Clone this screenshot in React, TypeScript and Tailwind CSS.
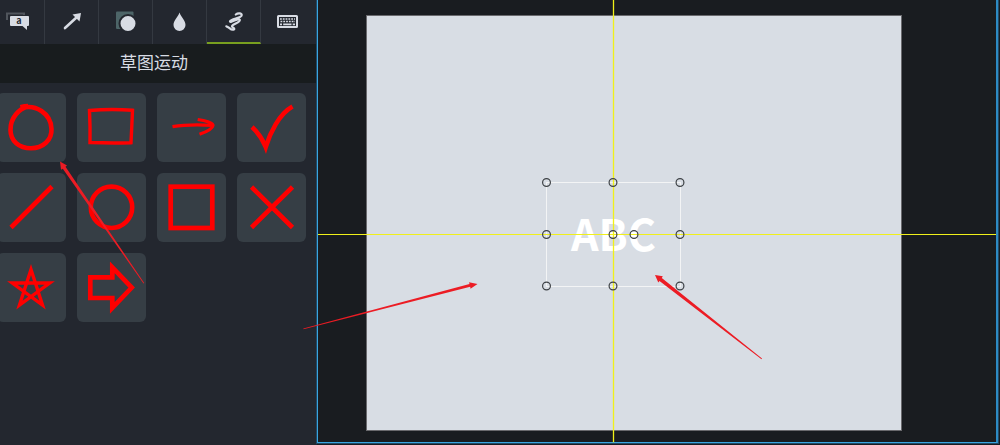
import type { ReactNode } from "react";

const TABS: { name: string; icon: ReactNode }[] = [
  {
    name: "标注",
    icon: (
      <>
        <path d="M17 20V13.5H34V15" fill="none" stroke="#50555c" strokeWidth="2" />
        <path d="M21 16H38.200Q39 16 39 17V25Q39 26 38 26H37V30L32.500 26H21Q20 26 20 25V17Q20 16 21 16Z" fill="#d8dce4" />
        <text x="29" y="24" textAnchor="middle" fontSize="9" fontWeight="700" fill="#23272f">
          a
        </text>
      </>
    ),
  },
  {
    name: "箭头",
    icon: (
      <>
        <path d="M21 28L33 17" stroke="#d8dce4" strokeWidth="2.600" strokeLinecap="round" />
        <path d="M37 13L28.500 14.500L35.500 21.500Z" fill="#d8dce4" />
      </>
    ),
  },
  {
    name: "形状",
    icon: (
      <>
        <rect x="18" y="11.500" width="17.500" height="17.500" rx="1" fill="#4d6568" />
        <circle cx="30" cy="23.500" r="8.500" fill="#d8dce4" stroke="#23272f" strokeWidth="2" />
      </>
    ),
  },
  {
    name: "模糊",
    icon: <path d="M27.500 12.500C29 17 33.500 20.500 33.500 25A6 6 0 0 1 21.500 25C21.500 20.500 26 17 27.500 12.500Z" fill="#d8dce4" />,
  },
  {
    name: "草图运动",
    icon: (
      <path
        d="M29.800 14.500C32 12.600 36.800 13 35.500 15.800C34 18.500 25 18.500 24 21.300C23.500 23.800 32.500 17.300 33.800 19.800C34.500 22.800 25.800 24 26 26.500C26.500 28 29.500 28.300 27.800 29.500C24.800 31 23.300 26.800 20.300 26.300"
        fill="none"
        stroke="#d8dce4"
        strokeWidth="2.200"
        strokeLinecap="round"
      />
    ),
  },
  {
    name: "键盘",
    icon: (
      <>
        <rect x="18" y="16" width="19" height="11" rx="0.500" fill="none" stroke="#d8dce4" strokeWidth="2" />
        <path d="M20 19H35" stroke="#d8dce4" strokeWidth="1.600" strokeDasharray="1.800 1" />
        <path d="M20.500 21.500H35" stroke="#d8dce4" strokeWidth="1.600" strokeDasharray="1.800 1" />
        <path d="M20 24.300H22M23.200 24.300H31.500M32.700 24.300H35" stroke="#d8dce4" strokeWidth="1.800" />
      </>
    ),
  },
];

const SKETCHES: { name: string; width: number; shape: ReactNode }[] = [
  {
    name: "手绘圆",
    width: 4.6,
    shape: <path d="M23.500 14.300C26 13.500 28.500 13 31 13M25 15C38 11 54 20 54.500 36C55 47 46 55.200 34 55.200C22 55.200 13.500 48 13.500 37C13.300 25 22 15.500 31 13.500" />,
  },
  { name: "手绘矩形", width: 3.4, shape: <path d="M12.500 17.500Q34 15.500 55.500 17.300Q54.800 34 54 49.700Q34 50.300 13 49.500Q13.300 34 12.500 17.500Z" /> },
  { name: "手绘箭头", width: 3.2, shape: <path d="M15.500 33.700C28 31.500 42 31.500 55 32.300M40.700 26.500C47 27.500 56.500 29.500 56 32.500C55.500 36 49 39 42.500 41.300" /> },
  { name: "对勾", width: 4.6, shape: <path d="M15 34C20.500 39 25.500 46 28.700 54C33 40 42 21 55.500 13.500" /> },
  { name: "直线", width: 4.6, shape: <path d="M14 54.500L55 13.500" /> },
  { name: "圆", width: 4.6, shape: <circle cx="34.500" cy="34.300" r="20.700" /> },
  { name: "正方形", width: 4.7, shape: <rect x="13.700" y="13.700" width="41.600" height="41.300" /> },
  { name: "叉", width: 4.6, shape: <path d="M14.500 14L55.500 54.500M55.500 14L14.500 54.500" /> },
  { name: "星形", width: 3.4, shape: <path d="M34 16.500L45.500 52L15.300 30H52.700L22.500 52Z" /> },
  { name: "箭头形状", width: 4.7, shape: <path d="M13.300 24.400H35.300V14.300L54.700 34.600L35.300 54.900V45H13.300Z" /> },
];

function ToolPanel() {
  return (
    <aside className="w-[317px] shrink-0 overflow-hidden bg-[#23272f]">
      <div className="-ml-[9px]">
        <nav className="flex h-11 bg-[#23272f]">
          {TABS.map((tab, i) => (
            <button
              key={tab.name}
              type="button"
              aria-label={tab.name}
              className={
                i === 4
                  ? "w-[54px] border-r border-b-2 border-r-[#343941] border-b-[#789f1f]"
                  : i === 5
                    ? "w-[54px]"
                    : "w-[54px] border-r border-[#343941]"
              }
            >
              <svg viewBox="1 0 54 44" className="h-11 w-[54px] max-w-none">
                {tab.icon}
              </svg>
            </button>
          ))}
        </nav>
        <h1 className="flex h-[39px] items-center justify-center bg-[#181c1e] pb-1 text-[17px] leading-6 text-[#d8dce4]">草图运动</h1>
        <div className="grid grid-cols-[repeat(4,69px)] gap-[11px] pt-[10px] pl-[6px]">
          {SKETCHES.map((s) => (
            <button
              key={s.name}
              type="button"
              aria-label={s.name}
              className="size-[69px] rounded-md bg-[#363e45]"
            >
              <svg viewBox="0 0 69 69" className="size-full" fill="none" stroke="#ff0000" strokeWidth={s.width} strokeMiterlimit="8">
                {s.shape}
              </svg>
            </button>
          ))}
        </div>
      </div>
    </aside>
  );
}

const HANDLES = [
  [0.5, 0.5],
  [67, 0.5],
  [134, 0.5],
  [0.5, 52.5],
  [67, 52.5],
  [88, 52.5],
  [134, 52.5],
  [0.5, 104],
  [67, 104],
  [134, 104],
];

function Stage() {
  return (
    <main className="relative mr-[2px] mb-[2px] flex flex-1 border-r-2 border-b border-l border-[#39a5e0] border-r-[#2d8bc4] shadow-[0_0_0_1px_#214a66]">
      <div className="mt-[15px] mr-[94px] mb-[11px] ml-12 flex-1 border border-[#69696d] bg-[#d8dde4]" />
      <div className="absolute top-[182px] left-[228px] flex h-[105px] w-[135px] items-center justify-center border border-[#f3f4f5] pb-1">
        <span className="text-[43px] leading-none font-bold text-white">ABC</span>
      </div>
      <div className="absolute top-[234px] right-0 left-0 h-px bg-[#f0f01a]" />
      <div className="absolute top-0 bottom-0 left-[295px] w-px bg-[#f0f01a] shadow-[0_0_0_1px_rgba(240,240,0,0.15)]" />
      <svg className="absolute top-[182px] left-[228px] h-[105px] w-[135px] overflow-visible" viewBox="0 0 135 105">
        {HANDLES.map(([x, y]) => (
          <circle key={`${x}-${y}`} cx={x} cy={y} r="3.900" fill="none" stroke="#3c4044" strokeWidth="1.200" />
        ))}
      </svg>
    </main>
  );
}

function Annotations() {
  return (
    <svg className="pointer-events-none absolute top-0 left-0 h-[445px] w-[1000px] max-w-none" viewBox="0 0 1000 445" fill="#ec1c24">
      <path d="M60 161.500L67 165.500L65.500 166.800L144.200 283L143.500 283.500L62.800 168.700L61 169.800Z" />
      <path d="M477.500 284L470.500 288.700L470.200 286.700L303.500 329.300L303.300 328.500L469.500 284L469 282.200Z" />
      <path d="M655 275L662.800 276.300L661.800 278L762 358.500L761.500 359.200L659.500 281L658.300 282.500Z" />
    </svg>
  );
}

export default function App() {
  return (
    <div className="relative flex min-h-screen overflow-hidden bg-[#191c20] font-['Noto_Sans_CJK_SC',sans-serif]">
      <ToolPanel />
      <Stage />
      <Annotations />
    </div>
  );
}
